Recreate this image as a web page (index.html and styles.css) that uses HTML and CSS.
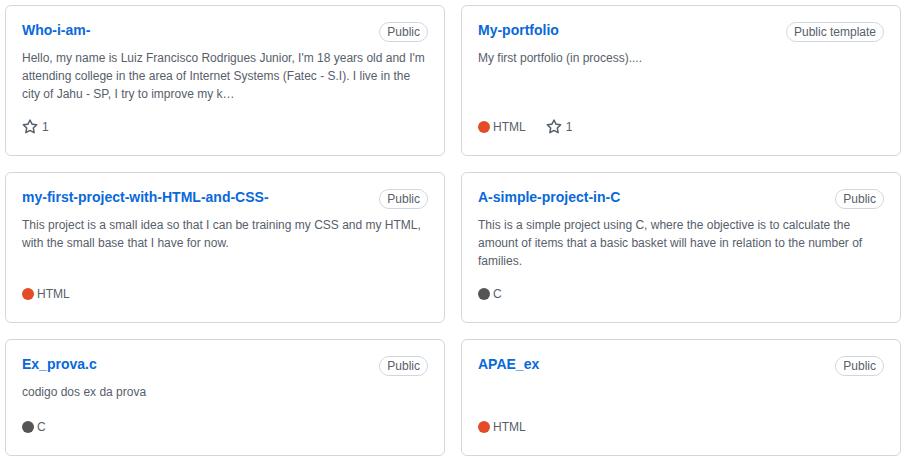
FILE: index.html
```html
<!DOCTYPE html>
<html lang="en">
<head>
<meta charset="utf-8">
<title>Pinned repositories</title>
<link rel="stylesheet" href="styles.css">
</head>
<body>
<div class="pinned">
  <div class="card">
    <div class="head"><a class="title" href="#">Who-i-am-</a><span class="label">Public</span></div>
    <p class="desc">Hello, my name is Luiz Francisco Rodrigues Junior, I'm 18 years old and I'm attending college in the area of Internet Systems (Fatec - S.I). I live in the city of Jahu - SP, I try to improve my k…</p>
    <p class="meta">
      <span class="stars"><svg class="star" viewBox="0 0 16 16" width="16" height="16"><path d="M8 .25a.75.75 0 0 1 .673.418l1.882 3.815 4.21.612a.75.75 0 0 1 .416 1.279l-3.046 2.970.719 4.192a.751.751 0 0 1-1.088.791L8 12.347l-3.766 1.980a.75.75 0 0 1-1.088-.79l.72-4.194L.818 6.374a.75.75 0 0 1 .416-1.28l4.21-.611L7.327.668A.75.75 0 0 1 8 .25Zm0 2.445L6.615 5.5a.75.75 0 0 1-.564.41l-3.097.45 2.24 2.184a.75.75 0 0 1 .216.664l-.528 3.084 2.769-1.456a.75.75 0 0 1 .698 0l2.77 1.456-.53-3.084a.75.75 0 0 1 .216-.664l2.24-2.183-3.096-.45a.75.75 0 0 1-.564-.41L8 2.694Z"/></svg>1</span>
    </p>
  </div>
  <div class="card">
    <div class="head"><a class="title" href="#">My-portfolio</a><span class="label">Public template</span></div>
    <p class="desc">My first portfolio (in process)....</p>
    <p class="meta">
      <span class="lang"><span class="dot html"></span>HTML</span>
      <span class="stars"><svg class="star" viewBox="0 0 16 16" width="16" height="16"><path d="M8 .25a.75.75 0 0 1 .673.418l1.882 3.815 4.21.612a.75.75 0 0 1 .416 1.279l-3.046 2.97.719 4.192a.751.751 0 0 1-1.088.791L8 12.347l-3.766 1.98a.75.75 0 0 1-1.088-.79l.72-4.194L.818 6.374a.75.75 0 0 1 .416-1.28l4.21-.611L7.327.668A.75.75 0 0 1 8 .25Zm0 2.445L6.615 5.5a.75.75 0 0 1-.564.41l-3.097.45 2.24 2.184a.75.75 0 0 1 .216.664l-.528 3.084 2.769-1.456a.75.75 0 0 1 .698 0l2.77 1.456-.53-3.084a.75.75 0 0 1 .216-.664l2.24-2.183-3.096-.45a.75.75 0 0 1-.564-.41L8 2.694Z"/></svg>1</span>
    </p>
  </div>
  <div class="card">
    <div class="head"><a class="title" href="#">my-first-project-with-HTML-and-CSS-</a><span class="label">Public</span></div>
    <p class="desc">This project is a small idea so that I can be training my CSS and my HTML, with the small base that I have for now.</p>
    <p class="meta">
      <span class="lang"><span class="dot html"></span>HTML</span>
    </p>
  </div>
  <div class="card">
    <div class="head"><a class="title" href="#">A-simple-project-in-C</a><span class="label">Public</span></div>
    <p class="desc">This is a simple project using C, where the objective is to calculate the amount of items that a basic basket will have in relation to the number of families.</p>
    <p class="meta">
      <span class="lang"><span class="dot c"></span>C</span>
    </p>
  </div>
  <div class="card">
    <div class="head"><a class="title" href="#">Ex_prova.c</a><span class="label">Public</span></div>
    <p class="desc">codigo dos ex da prova</p>
    <p class="meta">
      <span class="lang"><span class="dot c"></span>C</span>
    </p>
  </div>
  <div class="card">
    <div class="head"><a class="title" href="#">APAE_ex</a><span class="label">Public</span></div>
    <p class="desc"></p>
    <p class="meta">
      <span class="lang"><span class="dot html"></span>HTML</span>
    </p>
  </div>
</div>
</body>
</html>
```
FILE: styles.css
```css
html, body {
  margin: 0;
  padding: 0;
  background: #ffffff;
}

body {
  font-family: "Liberation Sans", Arial, Helvetica, sans-serif;
  color: #1f2328;
}

.pinned {
  display: grid;
  grid-template-columns: 440px 440px;
  column-gap: 16px;
  row-gap: 16px;
  padding: 5px;
}

.card {
  display: flex;
  flex-direction: column;
  border: 1px solid #d0d7de;
  border-radius: 6px;
  padding: 16px;
  box-sizing: border-box;
}

.head {
  display: flex;
  align-items: flex-start;
  justify-content: space-between;
  height: 21px;
}

.title {
  font-size: 14px;
  font-weight: bold;
  line-height: 16px;
  color: #0969da;
  text-decoration: none;
}

.label {
  margin-top: 0;
  font-size: 12px;
  line-height: 18px;
  padding: 0 7px;
  border: 1px solid #d0d7de;
  border-radius: 2em;
  color: #57606a;
  white-space: nowrap;
}

.desc {
  flex: 1 1 auto;
  margin: 6px 0 14px;
  font-size: 12px;
  line-height: 18px;
  color: #57606a;
  min-height: 20px;
}

.meta {
  margin: 0;
  display: flex;
  align-items: center;
  height: 20px;
  padding-bottom: 2px;
  font-size: 12px;
  line-height: 20px;
  color: #57606a;
}

.lang {
  display: inline-flex;
  align-items: center;
  margin-right: 20px;
}

.dot {
  display: inline-block;
  width: 12px;
  height: 12px;
  border-radius: 50%;
  margin-right: 3px;
}

.dot.html { background: #e34c26; }
.dot.c { background: #555555; }

.stars {
  display: inline-flex;
  align-items: center;
}

.star {
  fill: #57606a;
  margin-right: 4px;
}
```
